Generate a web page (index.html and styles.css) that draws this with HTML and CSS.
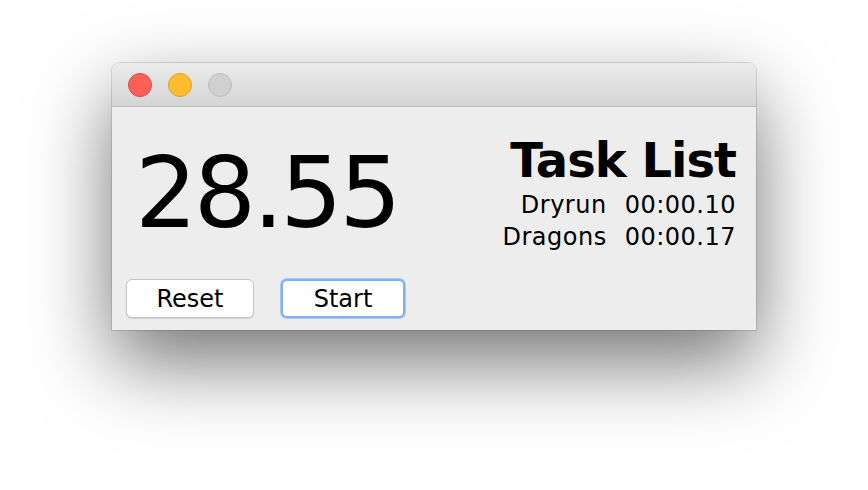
FILE: index.html
```html
<!DOCTYPE html>
<html lang="en">
<head>
  <meta charset="UTF-8">
  <title>Timer</title>
  <link rel="stylesheet" href="styles.css">
</head>
<body>

<div class="window">
  <div class="titlebar">
    <span class="light red"></span>
    <span class="light yellow"></span>
    <span class="light gray"></span>
  </div>

  <div class="content">
    <div class="top">
      <div class="clock">28.55</div>
      <div class="tasks">
        <div class="tasks-title">Task List</div>
        <div class="task-table">
          <span class="task-name">Dryrun</span><span class="task-time">00:00.10</span>
          <span class="task-name">Dragons</span><span class="task-time">00:00.17</span>
        </div>
      </div>
    </div>

    <div class="buttons">
      <button class="btn">Reset</button>
      <button class="btn focused">Start</button>
    </div>
  </div>
</div>

</body>
</html>
```

FILE: styles.css
```css
body {
  margin: 0;
  background: #fff;
  font-family: "DejaVu Sans", "Lucida Grande", sans-serif;
  color: #000;
  padding: 63px 0 0 112px;
  width: 868px;
  height: 490px;
  box-sizing: border-box;
  overflow: hidden;
}

.window {
  width: 644px;
  height: 267px;
  background: #ededed;
  border-radius: 8px 8px 0 0;
  box-shadow: 0 0 0 1px rgba(0, 0, 0, 0.12), 0 32px 80px rgba(0, 0, 0, 0.55);
  display: flex;
  flex-direction: column;
  overflow: hidden;
}

.titlebar {
  height: 43px;
  border-bottom: 1px solid #bdbdbd;
  background: linear-gradient(#ebebeb, #d5d5d5);
  display: flex;
  align-items: center;
  gap: 16px;
  padding-left: 16px;
}

.light {
  width: 22px;
  height: 22px;
  border-radius: 50%;
  border: 1px solid;
}

.red {
  background: #fe5f57;
  border-color: #e0443e;
}

.yellow {
  background: #febc2e;
  border-color: #dea123;
}

.gray {
  background: #d1d1d1;
  border-color: #bcbcbc;
}

.content {
  flex: 1;
  display: flex;
  flex-direction: column;
  padding: 0 20px 12px 14px;
}

.top {
  flex: 1;
  display: flex;
  justify-content: space-between;
}

.clock {
  font-size: 98px;
  line-height: 1;
  letter-spacing: -3.5px;
  padding: 37px 0 0 9px;
}

.tasks {
  padding-top: 29px;
  display: flex;
  flex-direction: column;
  align-items: flex-end;
}

.tasks-title {
  font-size: 48px;
  font-weight: bold;
  line-height: 48px;
  letter-spacing: -1px;
  margin-bottom: 5px;
}

.task-table {
  display: grid;
  grid-template-columns: auto auto;
  column-gap: 18px;
  font-size: 24px;
  line-height: 32px;
  letter-spacing: 0.5px;
}

.task-name {
  text-align: right;
}

.buttons {
  display: flex;
  gap: 27px;
}

.btn {
  height: 39px;
  width: 128px;
  background: #fff;
  border: 1px solid #c3c3c3;
  border-radius: 6px;
  box-shadow: 0 1px 1px rgba(0, 0, 0, 0.12);
  font-family: "DejaVu Sans", "Lucida Grande", sans-serif;
  font-size: 24px;
  color: #000;
  padding: 0;
}

.btn.focused {
  width: 124px;
  border: 2px solid #80b0ee;
  box-shadow: 0 0 0 1px #a9c8f3;
}
```
